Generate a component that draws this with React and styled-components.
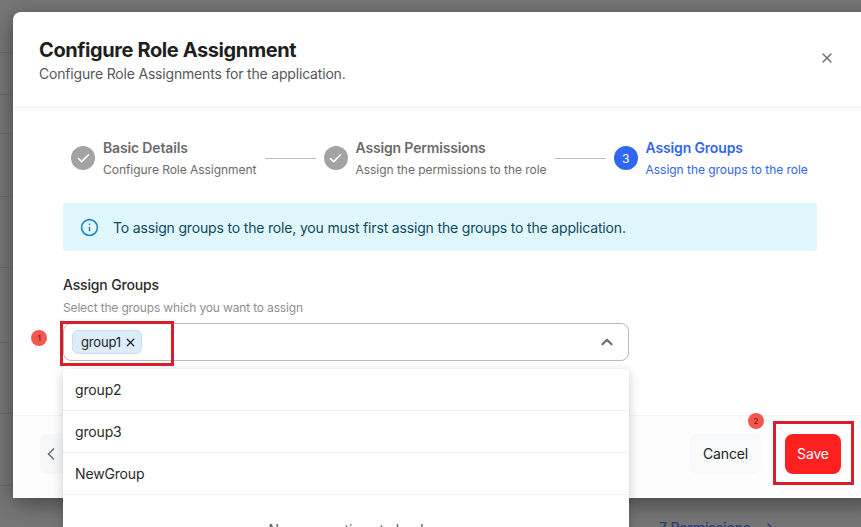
import React from 'react';
import styled, { createGlobalStyle } from 'styled-components';
import { Check, ChevronLeft, ChevronRight, ChevronUp, Info, X } from 'lucide-react';

const GlobalStyle = createGlobalStyle`
  html, body {
    margin: 0;
    padding: 0;
  }

  body {
    font-family: 'Inter', 'Liberation Sans', sans-serif;
    letter-spacing: -0.01em;
  }

  * {
    box-sizing: border-box;
  }
`;

const Page = styled.div`
  background-color: #767676;
  height: 527px;
  overflow: hidden;
  position: relative;
  width: 861px;
`;

const BackdropRow = styled.div`
  border-bottom: 1px solid #6a6a6a;
  height: ${props => props.$height}px;
`;

const BackdropLink = styled.div`
  align-items: center;
  color: #2b3a78;
  display: flex;
  font-size: 14px;
  font-weight: 500;
  gap: 12px;
  padding: 33px 0 0 659px;
`;

const Modal = styled.div`
  background-color: #fff;
  border-radius: 8px;
  box-shadow: 0 6px 22px rgba(0, 0, 0, 0.4);
  display: flex;
  flex-direction: column;
  height: 486px;
  left: 13px;
  position: absolute;
  top: 12px;
  width: 870px;
`;

const Header = styled.div`
  align-items: center;
  box-shadow: 0 2px 6px rgba(0, 0, 0, 0.06);
  display: flex;
  height: 94px;
  justify-content: space-between;
  padding: 4px 48px 0 26px;

  h1 {
    color: #1f1f21;
    font-size: 20px;
    font-weight: 700;
    letter-spacing: -0.02em;
    line-height: 25px;
    margin: 0;
  }

  p {
    color: #55585c;
    font-size: 14px;
    letter-spacing: -0.013em;
    line-height: 21px;
    margin: 0;
  }
`;

const CloseButton = styled.div`
  color: #6c6f73;
  display: flex;
  margin-top: -6px;
`;

const Body = styled.div`
  flex: 1;
  padding: 32px 0 0 50px;
  width: 804px;
`;

const Stepper = styled.div`
  align-items: center;
  display: flex;
  padding-left: 8px;
`;

const Step = styled.div`
  align-items: center;
  color: ${props => (props.$active ? '#3366ee' : '#6b6b6b')};
  display: flex;
  gap: 8px;
`;

const StepCircle = styled.div`
  align-items: center;
  background-color: ${props => (props.$active ? '#2f66f2' : '#a3a3a3')};
  border-radius: 50%;
  color: #fff;
  display: flex;
  flex-shrink: 0;
  font-size: 12px;
  height: 24px;
  justify-content: center;
  width: 24px;
`;

const StepText = styled.div`
  strong {
    display: block;
    font-size: 14px;
    font-weight: 600;
    line-height: 20px;
  }

  span {
    display: block;
    font-size: 12px;
    font-weight: 400;
    letter-spacing: -0.003em;
    line-height: 16px;
    margin-top: 4px;
    white-space: nowrap;
  }
`;

const StepLine = styled.div`
  background-color: #bdbdbd;
  flex-shrink: 0;
  height: 1px;
  margin: 0 8px;
  width: ${props => props.$width}px;
`;

const Alert = styled.div`
  align-items: center;
  background-color: #e0f6fd;
  border-radius: 2px;
  color: #0e4a5c;
  display: flex;
  font-size: 14px;
  gap: 14px;
  height: 48px;
  letter-spacing: -0.012em;
  margin-top: 25px;
  padding-left: 17px;

  svg {
    color: #1c86c7;
  }
`;

const Field = styled.div`
  margin-top: 25px;
  width: 566px;
`;

const Label = styled.div`
  color: #2a2a2c;
  font-size: 14px;
  font-weight: 500;
  line-height: 18px;
`;

const Hint = styled.div`
  color: #8f8f8f;
  font-size: 12px;
  line-height: 16px;
  margin-top: 6px;
`;

const Select = styled.div`
  align-items: center;
  border: 1px solid #b9b9b9;
  border-radius: 8px;
  display: flex;
  height: 38px;
  justify-content: space-between;
  margin-top: 7px;
  padding: 0 12px 0 8px;
  position: relative;
`;

const Chip = styled.div`
  align-items: center;
  background-color: #dcedf9;
  border: 1px solid #c4dff2;
  border-radius: 6px;
  color: #222;
  display: flex;
  font-size: 13px;
  gap: 3px;
  height: 24px;
  padding: 0 4px 0 8px;
`;

const Dropdown = styled.div`
  background-color: #fff;
  border-radius: 4px;
  box-shadow: 0 3px 12px rgba(0, 0, 0, 0.2);
  left: -1px;
  position: absolute;
  right: -1px;
  top: 45px;
  z-index: 3;
`;

const Option = styled.div`
  align-items: center;
  border-bottom: 1px solid #efefef;
  color: #2a2a2c;
  display: flex;
  font-size: 14px;
  height: 42px;
  padding-left: 12px;
`;

const NoMore = styled.div`
  color: #55585c;
  font-size: 14px;
  padding: 26px 0 30px;
  text-align: center;
`;

const Footer = styled.div`
  align-items: center;
  background-color: #fdfdfd;
  border-top: 1px solid #f4f4f4;
  display: flex;
  height: 83px;
  justify-content: space-between;
  padding: 0 42px 7px 27px;
`;

const BackButton = styled.div`
  align-items: center;
  background-color: #f7f8f9;
  border-radius: 6px;
  color: #6c6f73;
  display: flex;
  height: 40px;
  padding-left: 1px;
  width: 40px;
`;

const Actions = styled.div`
  align-items: center;
  display: flex;
  gap: 24px;
`;

const Button = styled.div`
  align-items: center;
  background-color: ${props => (props.$primary ? '#ff2020' : '#f8f9fa')};
  border-radius: 8px;
  color: ${props => (props.$primary ? '#fff' : '#222')};
  display: flex;
  font-size: 14px;
  height: 40px;
  justify-content: center;
  width: ${props => props.$width}px;
`;

const Highlight = styled.div`
  border: 3px solid #d81e2c;
  height: ${props => props.$height}px;
  left: ${props => props.$left}px;
  position: absolute;
  top: ${props => props.$top}px;
  width: ${props => props.$width}px;
  z-index: 4;
`;

const Marker = styled.div`
  align-items: center;
  background-color: #f4574e;
  border-radius: 50%;
  color: #8a1f1a;
  display: flex;
  font-size: 8px;
  font-weight: 600;
  height: 16px;
  justify-content: center;
  left: ${props => props.$left}px;
  position: absolute;
  top: ${props => props.$top}px;
  width: 16px;
  z-index: 4;
`;

const steps = [
  { title: 'Basic Details', sub: 'Configure Role Assignment', line: 51 },
  { title: 'Assign Permissions', sub: 'Assign the permissions to the role', line: 51 },
  { title: 'Assign Groups', sub: 'Assign the groups to the role', active: true },
];

const backdropRows = [53, 42, 39, 63, 71, 75, 71, 72];

export default function App() {
  return (
    <Page>
      <GlobalStyle />
      {backdropRows.map((height, i) => (
        <BackdropRow key={i} $height={height} />
      ))}
      <BackdropLink>
        7 Permissions <ChevronRight size={16} />
      </BackdropLink>

      <Modal>
        <Header>
          <div>
            <h1>Configure Role Assignment</h1>
            <p>Configure Role Assignments for the application.</p>
          </div>
          <CloseButton>
            <X size={16} />
          </CloseButton>
        </Header>

        <Body>
          <Stepper>
            {steps.map((step, i) => (
              <React.Fragment key={step.title}>
                <Step $active={step.active}>
                  <StepCircle $active={step.active}>
                    {step.active ? i + 1 : <Check size={15} strokeWidth={2.5} />}
                  </StepCircle>
                  <StepText>
                    <strong>{step.title}</strong>
                    <span>{step.sub}</span>
                  </StepText>
                </Step>
                {step.line && <StepLine $width={step.line} />}
              </React.Fragment>
            ))}
          </Stepper>

          <Alert>
            <Info size={19} />
            To assign groups to the role, you must first assign the groups to the application.
          </Alert>

          <Field>
            <Label>Assign Groups</Label>
            <Hint>Select the groups which you want to assign</Hint>
            <Select>
              <Chip>
                group1 <X size={13} strokeWidth={2.25} />
              </Chip>
              <ChevronUp size={18} color="#6c6f73" strokeWidth={3} />
              <Dropdown>
                <Option>group2</Option>
                <Option>group3</Option>
                <Option>NewGroup</Option>
                <NoMore>No more options to load</NoMore>
              </Dropdown>
            </Select>
          </Field>
        </Body>

        <Footer>
          <BackButton>
            <ChevronLeft size={20} />
          </BackButton>
          <Actions>
            <Button $width={71}>Cancel</Button>
            <Button $primary $width={56}>Save</Button>
          </Actions>
        </Footer>
      </Modal>

      <Highlight $left={60} $top={321} $width={114} $height={45} />
      <Highlight $left={773} $top={421} $width={81} $height={64} />
      <Marker $left={31} $top={330}>1</Marker>
      <Marker $left={748} $top={413}>2</Marker>
    </Page>
  );
}
